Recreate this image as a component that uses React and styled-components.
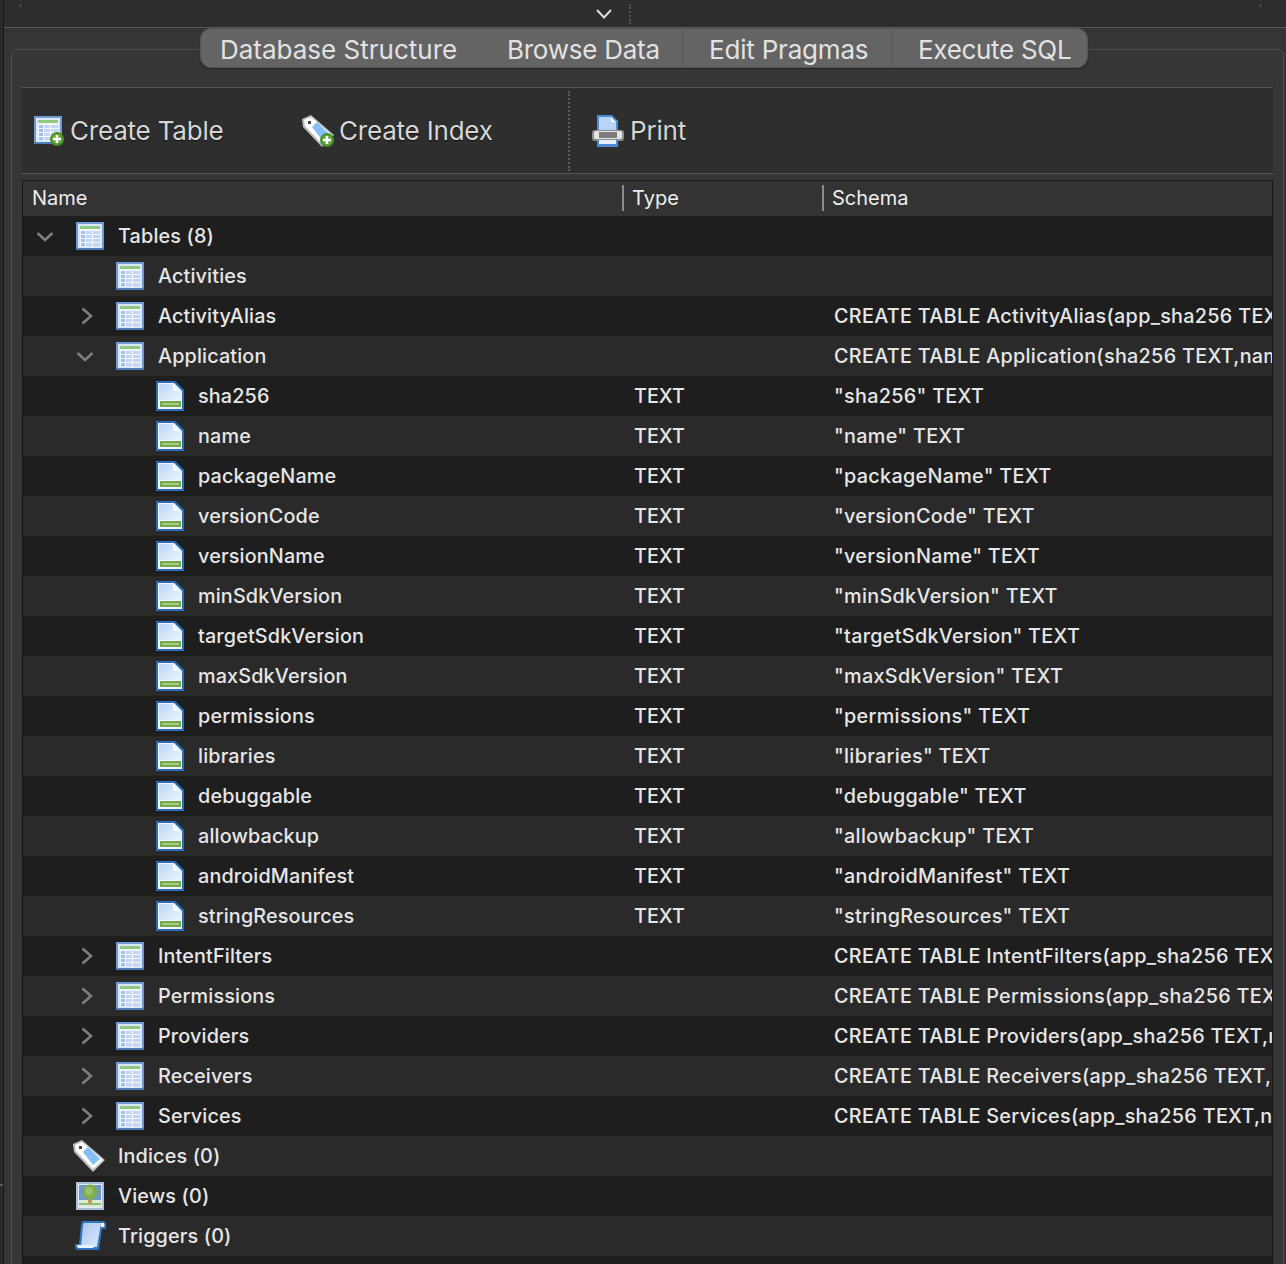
import React from "react";
import styled, { createGlobalStyle } from "styled-components";

const GlobalStyle = createGlobalStyle`
  html, body {
    margin: 0;
    padding: 0;
    height: 1264px;
    overflow: hidden;
    background: #2a2a2a;
    font-family: Inter, "Noto Sans", sans-serif;
  }
`;

const fields = [
  "sha256", "name", "packageName", "versionCode", "versionName", "minSdkVersion", "targetSdkVersion",
  "maxSdkVersion", "permissions", "libraries", "debuggable", "allowbackup", "androidManifest", "stringResources",
];

const rows = [
  { depth: 0, arrow: "open", icon: "table", name: "Tables (8)" },
  { depth: 1, icon: "table", name: "Activities" },
  { depth: 1, arrow: "closed", icon: "table", name: "ActivityAlias", schema: "CREATE TABLE ActivityAlias(app_sha256 TEXT,name TEXT" },
  { depth: 1, arrow: "open", icon: "table", name: "Application", schema: "CREATE TABLE Application(sha256 TEXT,name TEXT,packageName" },
  ...fields.map((f) => ({ depth: 2, icon: "field", name: f, type: "TEXT", schema: `"${f}" TEXT` })),
  { depth: 1, arrow: "closed", icon: "table", name: "IntentFilters", schema: "CREATE TABLE IntentFilters(app_sha256 TEXT,name TEXT" },
  { depth: 1, arrow: "closed", icon: "table", name: "Permissions", schema: "CREATE TABLE Permissions(app_sha256 TEXT,name TEXT" },
  { depth: 1, arrow: "closed", icon: "table", name: "Providers", schema: "CREATE TABLE Providers(app_sha256 TEXT,name TEXT" },
  { depth: 1, arrow: "closed", icon: "table", name: "Receivers", schema: "CREATE TABLE Receivers(app_sha256 TEXT,name TEXT" },
  { depth: 1, arrow: "closed", icon: "table", name: "Services", schema: "CREATE TABLE Services(app_sha256 TEXT,name TEXT" },
  { depth: 0, icon: "tag", name: "Indices (0)", shift: 3 },
  { depth: 0, icon: "view", name: "Views (0)" },
  { depth: 0, icon: "trigger", name: "Triggers (0)", shift: 1 },
];

const TableGlyph = () => (
  <g>
    <rect width="28" height="28" fill="#6f9ad4" />
    <rect y="26" width="28" height="2" fill="#4f7db8" />
    <rect x="2" y="2" width="24" height="24" fill="#dce8f8" />
    <rect x="4" y="4" width="20" height="20" fill="#f4f8fd" />
    <rect x="4" y="4" width="20" height="3" fill="#8fcb7e" />
    {[9, 13, 17, 21].map((y) => (
      <g key={y}>
        <rect x="5" y={y} width="4" height="3" fill="#a3c0ea" />
        <rect x="10" y={y} width="6" height="3" fill="#c3d7f3" />
        <rect x="17" y={y} width="7" height="3" fill="#c3d7f3" />
      </g>
    ))}
  </g>
);

const TableIcon = () => (
  <svg width="28" height="28" viewBox="0 0 28 28">
    <TableGlyph />
  </svg>
);

const FieldIcon = () => (
  <svg width="28" height="30" viewBox="0 0 28 30">
    <defs>
      <linearGradient id="docFill" x1="0" y1="0" x2="1" y2="1">
        <stop offset="0" stopColor="#bcd6f6" />
        <stop offset="1" stopColor="#eef5fd" />
      </linearGradient>
    </defs>
    <path d="M0 0H19L28 9V30H0Z" fill="#2a6cb5" />
    <path d="M2 2H18L26 10V28H2Z" fill="#f2f7fd" />
    <path d="M3 3H17V10H25V19H3Z" fill="url(#docFill)" />
    <rect x="4" y="20" width="21" height="6" fill="#75a94f" />
    <rect x="6" y="22" width="17" height="2" fill="#a5cc7c" />
  </svg>
);

const PlusBadge = ({ cx, cy }) => (
  <g>
    <circle cx={cx} cy={cy} r="7" fill="#4c8f2d" />
    <circle cx={cx} cy={cy} r="5" fill="#6bab45" />
    <rect x={cx - 4} y={cy - 1.2} width="8" height="2.4" fill="#fff" />
    <rect x={cx - 1.2} y={cy - 4} width="2.4" height="8" fill="#fff" />
  </g>
);

const TagGlyph = () => (
  <g>
    <path d="M0 4L9 0L32 20L20 32L1 12Z" fill="#bdbdbd" />
    <path d="M2 5L9 2L30 20L20 29L3 11Z" fill="#fff" />
    <path d="M10 12L15 7L27 19L20 25Z" fill="#84c0f6" />
    <rect x="6" y="6" width="3" height="3" fill="#444" />
  </g>
);

const CreateTableIcon = () => (
  <svg width="32" height="32" viewBox="0 0 32 32">
    <g transform="translate(0 1)">
      <TableGlyph />
    </g>
    <PlusBadge cx={23} cy={24} />
  </svg>
);

const CreateIndexIcon = () => (
  <svg width="32" height="32" viewBox="0 0 32 32">
    <TagGlyph />
    <PlusBadge cx={25} cy={25} />
  </svg>
);

const PrintIcon = () => (
  <svg width="32" height="32" viewBox="0 0 32 32">
    <path d="M5 0H20L26 6V17H5Z" fill="#4d8ad6" />
    <path d="M7 2H19L24 7V17H7Z" fill="#b9d5f5" />
    <path d="M19 2V7H24Z" fill="#eef5fd" />
    <rect x="0" y="15" width="32" height="11" rx="3" fill="#8d8d8d" />
    <rect x="2" y="16" width="28" height="8" rx="2" fill="#e4e4e4" />
    <rect x="7" y="17" width="18" height="6" fill="#7e7e7e" />
    <rect x="5" y="25" width="21" height="7" fill="#4d8ad6" />
    <rect x="7" y="25" width="17" height="4" fill="#e8f1fb" />
  </svg>
);

const TagIcon = () => (
  <svg width="32" height="32" viewBox="0 0 32 32">
    <TagGlyph />
  </svg>
);

const ViewIcon = () => (
  <svg width="28" height="28" viewBox="0 0 28 28">
    <rect width="28" height="28" fill="#a9bedd" />
    <rect x="2" y="2" width="24" height="24" fill="#e6edf6" />
    <rect x="3" y="3" width="22" height="15" fill="#7097cc" />
    <rect x="3" y="18" width="22" height="7" fill="#dcebd3" />
    <rect x="3" y="21" width="22" height="2" fill="#8cc07a" />
    <rect x="12" y="16" width="4" height="6" fill="#c99a54" />
    <circle cx="14" cy="10" r="7.5" fill="#7fae4f" />
    <circle cx="13" cy="9" r="4" fill="#96c268" />
  </svg>
);

const TriggerIcon = () => (
  <svg width="32" height="30" viewBox="0 0 32 30">
    <defs>
      <linearGradient id="scrollFill" x1="0" y1="0" x2="1" y2="1">
        <stop offset="0" stopColor="#a9c8f0" />
        <stop offset="1" stopColor="#dbe9fa" />
      </linearGradient>
    </defs>
    <path d="M8 0H29Q32 2 31 8H27L24 29H3Q-1 28 0 23H4L6 4Q6 1 8 0Z" fill="#2f73bf" />
    <path d="M9 2H26L22 26H6L8 4Z" fill="url(#scrollFill)" />
    <path d="M26 2H29Q30 4 29 6H26Z" fill="#fff" />
    <path d="M2 24H18Q18 26 19 27H4Q2 27 2 24Z" fill="#eaf3fd" />
  </svg>
);

const icons = {
  table: <TableIcon />,
  field: <FieldIcon />,
  tag: <TagIcon />,
  view: <ViewIcon />,
  trigger: <TriggerIcon />,
};

const Chevron = ({ open }) => (
  <svg width="18" height="18" viewBox="0 0 18 18">
    <path
      d={open ? "M1.5 6L9 13L16.5 6" : "M6.5 1.5L15 9L6.5 16.5"}
      fill="none"
      stroke="#7e7e7e"
      strokeWidth="2.6"
    />
  </svg>
);

const App = () => {
  return (
    <Page>
      <GlobalStyle />
      <LeftStrip />
      <Window>
        <TopBar>
          <Dot $left={15} />
          <Collapse>
            <svg width="18" height="12" viewBox="0 0 18 12">
              <path d="M2 2L9 9.5L16 2" fill="none" stroke="#dcdcdc" strokeWidth="2" />
            </svg>
          </Collapse>
          <TopDots />
          <Dot $left={628} />
        </TopBar>
        <Tabs>
          <Tab $width={280} $pad={19}>Database Structure</Tab>
          <Tab $width={201} $pad={26} $track={-0.25}>Browse Data</Tab>
          <Tab $width={210} $pad={26} $track={-0.2} $line>Edit Pragmas</Tab>
          <Tab $width={196} $pad={25} $track={-0.3} $line>Execute SQL</Tab>
        </Tabs>
        <Pane>
          <Toolbar>
            <ToolButton $width={268} $gap={4}>
              <CreateTableIcon />
              <ToolLabel>Create Table</ToolLabel>
            </ToolButton>
            <ToolButton $width={266} $gap={5}>
              <CreateIndexIcon />
              <ToolLabel>Create Index</ToolLabel>
            </ToolButton>
            <ToolSep />
            <ToolButton $width={120} $gap={6}>
              <PrintIcon />
              <ToolLabel>Print</ToolLabel>
            </ToolButton>
          </Toolbar>
          <Tree>
            <HeaderRow>
              <HeaderCell $width={599} $pad={9}>Name</HeaderCell>
              <HeaderCell $width={200} $pad={8} $line>Type</HeaderCell>
              <HeaderCell $pad={8} $line>Schema</HeaderCell>
            </HeaderRow>
            {rows.map((r, i) => (
              <Row key={i} $alt={i % 2 === 1}>
                <NameCell $depth={r.depth}>
                  <Arrow>{r.arrow && <Chevron open={r.arrow === "open"} />}</Arrow>
                  <IconSlot $shift={r.shift || 0}>{icons[r.icon]}</IconSlot>
                  <span>{r.name}</span>
                </NameCell>
                <TypeCell>{r.type}</TypeCell>
                <SchemaCell>{r.schema}</SchemaCell>
              </Row>
            ))}
          </Tree>
        </Pane>
      </Window>
    </Page>
  );
};

export default App;

const Page = styled.div`
  display: flex;
  width: 1286px;
  height: 1264px;
  overflow: hidden;
`;

const LeftStrip = styled.div`
  width: 3px;
  flex: none;
  background: linear-gradient(#2a2a2a 1184px, #5a5a5a 1184px, #5a5a5a 1186px, #2a2a2a 1186px);
`;

const Window = styled.div`
  width: 1283px;
  flex: none;
  background: #353535;
  border-left: 1px solid #171717;
  box-sizing: border-box;
`;

const TopBar = styled.div`
  height: 27px;
  background: #2d2d2d;
  border-bottom: 1px solid #585858;
  display: flex;
  align-items: center;
`;

const Dot = styled.div`
  width: 3px;
  height: 3px;
  margin: -17px 0 0 ${(p) => p.$left}px;
  border-radius: 50%;
  background: #4c4c4c;
`;

const Collapse = styled.div`
  width: 18px;
  height: 12px;
  margin-left: 573px;
  display: flex;
`;

const TopDots = styled.div`
  height: 20px;
  margin-left: 16px;
  border-left: 2px dotted #555;
`;

const Tabs = styled.div`
  position: relative;
  z-index: 1;
  display: flex;
  width: 888px;
  height: 40px;
  margin-left: 196px;
  overflow: hidden;
  border-radius: 11px;
  background: #646464;
  box-shadow: 0 1px 1px #222;
  border: 1px solid #555;
  box-sizing: border-box;
`;

const Tab = styled.div`
  width: ${(p) => p.$width}px;
  flex: none;
  box-sizing: border-box;
  padding-left: ${(p) => p.$pad}px;
  border-left: ${(p) => (p.$line ? "1px solid #555" : "none")};
  line-height: 42px;
  font-size: 26px;
  letter-spacing: ${(p) => p.$track || 0}px;
  color: #e2e2e2;
  white-space: nowrap;
`;

const Pane = styled.div`
  margin: -19px 0 0 7px;
  height: 1300px;
  width: 1273px;
  box-sizing: border-box;
  padding: 37px 10px 0 10px;
  background: #363636;
  border: 1px solid #4e4e4e;
  border-radius: 7px 7px 0 0;
`;

const Toolbar = styled.div`
  height: 87px;
  box-sizing: border-box;
  background: #2e2e2e;
  border-top: 1px solid #565656;
  border-bottom: 1px solid #565656;
  display: flex;
  align-items: center;
  padding-left: 12px;
`;

const ToolButton = styled.div`
  width: ${(p) => p.$width}px;
  display: flex;
  align-items: center;
  gap: ${(p) => p.$gap}px;
`;

const ToolLabel = styled.span`
  font-size: 26px;
  letter-spacing: -0.2px;
  color: #d6d6d6;
  text-shadow: 0 1px 1px #111;
`;

const ToolSep = styled.div`
  height: 80px;
  margin-right: 22px;
  border-left: 2px dotted #5c5c5c;
`;

const Tree = styled.div`
  margin-top: 6px;
  border: 1px solid #161616;
  border-bottom: none;
  background: #1e1e1e;
  height: 1200px;
  overflow: hidden;
`;

const HeaderRow = styled.div`
  height: 35px;
  box-sizing: border-box;
  padding-bottom: 2px;
  display: flex;
  align-items: center;
  background: #333;
`;

const HeaderCell = styled.div`
  width: ${(p) => (p.$width ? `${p.$width}px` : "auto")};
  height: 26px;
  line-height: 26px;
  box-sizing: border-box;
  padding-left: ${(p) => p.$pad}px;
  font-size: 20px;
  color: #ededed;
  border-left: ${(p) => (p.$line ? "2px solid #8a8a8a" : "none")};
`;

const Row = styled.div`
  height: 40px;
  display: flex;
  align-items: center;
  background: ${(p) => (p.$alt ? "#2a2a2a" : "#1e1e1e")};
  font-size: 19.8px;
  font-weight: 500;
  letter-spacing: 0.15px;
  color: #e6e6e6;
  white-space: nowrap;
`;

const NameCell = styled.div`
  width: 600px;
  flex: none;
  box-sizing: border-box;
  padding-left: ${(p) => 12 + p.$depth * 40}px;
  display: flex;
  align-items: center;
`;

const Arrow = styled.div`
  width: 41px;
  flex: none;
  box-sizing: border-box;
  padding-left: 1px;
  display: flex;
`;

const IconSlot = styled.div`
  width: ${(p) => 42 + p.$shift}px;
  height: 32px;
  margin-left: ${(p) => -p.$shift}px;
  flex: none;
  display: flex;
  align-items: center;
  & svg {
    flex: none;
  }
`;

const TypeCell = styled.div`
  width: 200px;
  flex: none;
  box-sizing: border-box;
  padding-left: 11px;
  letter-spacing: 0;
`;

const SchemaCell = styled.div`
  flex: 1;
  min-width: 0;
  overflow: hidden;
  padding-left: 11px;
  letter-spacing: 0.3px;
`;
